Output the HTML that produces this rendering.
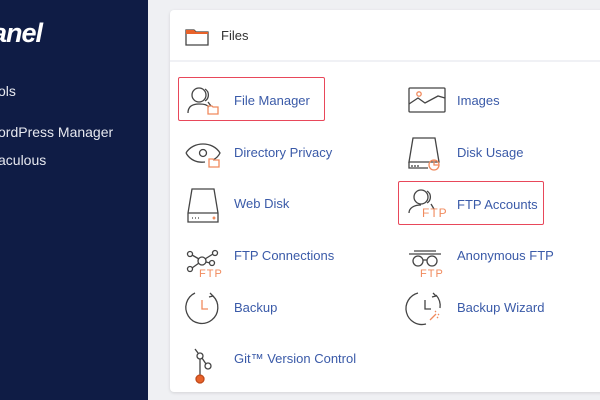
<!DOCTYPE html>
<html><head><meta charset="utf-8"><style>
*{margin:0;padding:0;box-sizing:border-box}
body{width:600px;height:400px;overflow:hidden;background:#eff0f3;font-family:"Liberation Sans",sans-serif;position:relative}
.side{position:absolute;left:0;top:0;width:148px;height:400px;background:#0f1c45}
.side .logo{position:absolute;left:-8px;top:18px;color:#fff;font-size:27px;font-weight:bold;font-style:italic;letter-spacing:-1px}
.side .it{position:absolute;left:-2px;color:#e6e8ef;font-size:14px}
.card{position:absolute;left:170px;top:10px;width:440px;height:382px;background:#fff;border-radius:4px;box-shadow:0 1px 3px rgba(0,0,0,.12)}
.hdr{position:absolute;left:0;top:0;width:100%;height:52px;border-bottom:2px solid #f0f1f5}
.hdr span{position:absolute;left:51px;top:18px;font-size:13px;color:#333}
.lbl{position:absolute;font-size:13px;color:#3a5aa8}
svg{position:absolute;overflow:visible}
.box{position:absolute;border:1.5px solid #e8475a;border-radius:2px}
</style></head><body>
<div class="side">
<div class="logo">anel</div>
<div class="it" style="top:83px">ols</div>
<div class="it" style="top:124px">ordPress Manager</div>
<div class="it" style="top:152px">aculous</div>
</div>
<div class="card">
<div class="hdr"><span>Files</span></div>
<svg style="left:15px;top:17px" width="24" height="20" viewBox="0 0 24 20"><path d="M1 3h8l2 2h12v13H1z" fill="none" stroke="#444" stroke-width="1.3"/><path d="M1 3h8l2 2h12v2H1z" fill="#e8622a"/></svg>
<div class="box" style="left:8px;top:67px;width:147px;height:44px"></div>
<div class="box" style="left:228px;top:171px;width:146px;height:44px"></div>
<!-- left column -->
<svg style="left:15px;top:76px" width="36" height="30" viewBox="0 0 36 30" fill="none" stroke="#444" stroke-width="1.3"><circle cx="14" cy="9" r="7"/><path d="M3 27c0-7 5-9 11-9s8 1 10 3"/><path d="M20 3a7 7 0 0 1 0 12M23 16l3 4"/><path d="M23 20h4l1 1h5v7h-10z" stroke="#f08a5d"/></svg>
<div class="lbl" style="left:64px;top:83px">File Manager</div>
<svg style="left:15px;top:130px" width="38" height="30" viewBox="0 0 38 30" fill="none" stroke="#444" stroke-width="1.3"><path d="M1 13c7-12 27-12 34 0c-2 4-5 6-7 7M20 22c-8 1-15-2-19-9"/><circle cx="18" cy="13" r="3.5"/><path d="M24 19h4l1 1h5v7h-10z" stroke="#f08a5d"/></svg>
<div class="lbl" style="left:64px;top:135px">Directory Privacy</div>
<svg style="left:17px;top:178px" width="32" height="36" viewBox="0 0 32 36" fill="none" stroke="#444" stroke-width="1.3"><path d="M5 1h22l4 24v9H1v-9z"/><path d="M1 25h30"/><path d="M5 30h1M8 30h1M11 30h1" /><circle cx="27" cy="30" r=".8" fill="#f08a5d" stroke="#f08a5d"/></svg>
<div class="lbl" style="left:64px;top:186px">Web Disk</div>
<svg style="left:16px;top:240px" width="36" height="32" viewBox="0 0 36 32" fill="none" stroke="#444" stroke-width="1.3"><circle cx="16" cy="11" r="4"/><circle cx="4" cy="4" r="2.5"/><circle cx="29" cy="3" r="2.5"/><circle cx="26" cy="13" r="2.5"/><circle cx="4" cy="19" r="2.5"/><path d="M6 5l7 4M19 9l8-5M20 12l4 1M13 13l-7 5"/></svg>
<div style="position:absolute;left:29px;top:258px;font-size:11px;color:#f08a5d;letter-spacing:1px">FTP</div>
<div class="lbl" style="left:64px;top:238px">FTP Connections</div>
<svg style="left:15px;top:280px" width="36" height="36" viewBox="0 0 36 36" fill="none" stroke="#444" stroke-width="1.3"><path d="M10 3A16 16 0 1 0 28 6"/><path d="M25 3l3 3-4 1" /><path d="M17 10v9h6" stroke="#f08a5d"/></svg>
<div class="lbl" style="left:64px;top:290px">Backup</div>
<svg style="left:22px;top:338px" width="24" height="40" viewBox="0 0 24 40" fill="none" stroke="#444" stroke-width="1.3"><path d="M3 1l3 4"/><circle cx="8" cy="8" r="3"/><circle cx="16" cy="18" r="3"/><path d="M8 11v18M10 10l4 6"/><circle cx="8" cy="31" r="4" fill="#e8622a" stroke="#c04a1a"/></svg>
<div class="lbl" style="left:64px;top:341px">Git™ Version Control</div>
<!-- right column -->
<svg style="left:238px;top:77px" width="38" height="26" viewBox="0 0 38 26" fill="none" stroke="#444" stroke-width="1.3"><rect x="1" y="1" width="36" height="24" rx="1"/><path d="M1 17l9-6 7 5 13-7 7 2"/><circle cx="11" cy="7" r="2.2" stroke="#f08a5d"/></svg>
<div class="lbl" style="left:287px;top:83px">Images</div>
<svg style="left:238px;top:127px" width="34" height="36" viewBox="0 0 34 36" fill="none" stroke="#444" stroke-width="1.3"><path d="M5 1h22l4 24H1z"/><path d="M1 25v6h19M4 28v2M7 28v2M10 28v2"/><circle cx="26" cy="28" r="5" stroke="#f08a5d"/><path d="M26 23v5h5" stroke="#f08a5d"/></svg>
<div class="lbl" style="left:287px;top:135px">Disk Usage</div>
<svg style="left:236px;top:178px" width="40" height="32" viewBox="0 0 40 32" fill="none" stroke="#444" stroke-width="1.3"><circle cx="15" cy="9" r="7"/><path d="M3 25c0-5 5-8 12-8M21 3a7 7 0 0 1 0 12M25 16l3 5"/></svg>
<div style="position:absolute;left:252px;top:196px;font-size:12px;color:#f08a5d;letter-spacing:1px">FTP</div>
<div class="lbl" style="left:287px;top:187px">FTP Accounts</div>
<svg style="left:238px;top:240px" width="36" height="20" viewBox="0 0 36 20" fill="none" stroke="#444" stroke-width="1.3"><path d="M6 1h22M1 4h32"/><circle cx="10" cy="11" r="5"/><circle cx="24" cy="11" r="5"/><path d="M15 10h4"/></svg>
<div style="position:absolute;left:250px;top:258px;font-size:11px;color:#f08a5d;letter-spacing:1px">FTP</div>
<div class="lbl" style="left:287px;top:238px">Anonymous FTP</div>
<svg style="left:238px;top:280px" width="36" height="36" viewBox="0 0 36 36" fill="none" stroke="#444" stroke-width="1.3"><path d="M10 3A16 16 0 1 0 18 34"/><path d="M28 5a16 16 0 0 1 4 13"/><path d="M25 3l3 3-4 1"/><path d="M17 10v9h6"/><path d="M22 30l6-6M27 21l1 1M31 24l-1 1M30 28l-1-1" stroke="#f08a5d"/></svg>
<div class="lbl" style="left:287px;top:290px">Backup Wizard</div>
</div>
</body></html>
